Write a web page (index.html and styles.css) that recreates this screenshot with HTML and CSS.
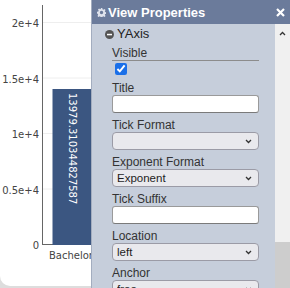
FILE: index.html
```html
<!DOCTYPE html>
<html lang="en">
  <head>
    <meta charset="UTF-8" />
    <meta name="viewport" content="width=device-width, initial-scale=1.0" />
    <title>View Properties</title>
    <link rel="stylesheet" href="styles.css">
  </head>
  <body>
    <div class="page">
      <div class="chart-card">
        <svg class="chart" width="91" height="286" viewBox="0 0 91 286">
          <g class="grid">
            <line x1="43" y1="22.5" x2="91" y2="22.5" />
            <line x1="43" y1="78" x2="91" y2="78" />
            <line x1="43" y1="133.5" x2="91" y2="133.5" />
            <line x1="43" y1="189" x2="91" y2="189" />
          </g>
          <g class="ticks">
            <text x="39" y="27">2e+4</text>
            <text x="39" y="82.5">1.5e+4</text>
            <text x="39" y="138">1e+4</text>
            <text x="39" y="193.5">0.5e+4</text>
            <text x="39" y="249">0</text>
          </g>
          <line class="axis" x1="42.5" y1="5" x2="42.5" y2="245" />
          <line class="axis" x1="42" y1="244.5" x2="91" y2="244.5" />
          <rect class="bar" x="52.5" y="89" width="40" height="156" />
          <text class="bar-label" transform="translate(68.5 93) rotate(90)">13979.310344827587</text>
          <text class="cat" x="49" y="259">Bachelor</text>
        </svg>
      </div>

      <aside class="props">
        <div class="props-head">
          <svg class="gear" width="9" height="9" viewBox="0 0 16 16">
            <path d="M6.6 0h2.8l.4 2.3 1.5.7 1.9-1.3 2 2-1.3 1.9.7 1.5 2.3.4v2.8l-2.3.4-.7 1.5 1.3 1.9-2 2-1.9-1.3-1.5.7-.4 2.3H6.6l-.4-2.3-1.5-.7-1.9 1.3-2-2 1.3-1.9-.7-1.5L0 9.4V6.6l2.3-.4.7-1.5-1.3-1.9 2-2 1.9 1.3 1.5-.7zM8 5a3 3 0 1 0 0 6 3 3 0 0 0 0-6z" />
          </svg>
          <span class="props-title">View Properties</span>
          <svg class="close" width="9" height="9" viewBox="0 0 9 9">
            <path d="M1 1l7 7M8 1l-7 7" />
          </svg>
        </div>
        <div class="props-body">
          <div class="props-content">
            <div class="group-title">
              <svg class="toggle" width="9" height="9" viewBox="0 0 9 9">
                <circle cx="4.5" cy="4.5" r="4.5" />
                <rect x="2" y="3.8" width="5" height="1.5" />
              </svg>
              <span>YAxis</span>
            </div>
            <label class="label underline">Visible</label>
            <div class="check-row"><input type="checkbox" checked /></div>

            <div class="field">
              <label class="label">Title</label>
              <input class="text" type="text" />
            </div>
            <div class="field">
              <label class="label">Tick Format</label>
              <div class="select-wrap">
                <select><option></option></select>
                <svg class="chev" width="7" height="5" viewBox="0 0 7 5"><path d="M1 1l2.5 2.5L6 1" /></svg>
              </div>
            </div>
            <div class="field">
              <label class="label">Exponent Format</label>
              <div class="select-wrap">
                <select><option>Exponent</option></select>
                <svg class="chev" width="7" height="5" viewBox="0 0 7 5"><path d="M1 1l2.5 2.5L6 1" /></svg>
              </div>
            </div>
            <div class="field">
              <label class="label">Tick Suffix</label>
              <input class="text" type="text" />
            </div>
            <div class="field">
              <label class="label">Location</label>
              <div class="select-wrap">
                <select><option>left</option></select>
                <svg class="chev" width="7" height="5" viewBox="0 0 7 5"><path d="M1 1l2.5 2.5L6 1" /></svg>
              </div>
            </div>
            <div class="field">
              <label class="label">Anchor</label>
              <div class="select-wrap">
                <select><option>free</option></select>
                <svg class="chev" width="7" height="5" viewBox="0 0 7 5"><path d="M1 1l2.5 2.5L6 1" /></svg>
              </div>
            </div>
          </div>
          <div class="scrollbar">
            <svg class="scroll-up" width="7" height="5" viewBox="0 0 7 5"><path d="M1 4l2.5-2.5L6 4" /></svg>
            <div class="thumb"></div>
          </div>
        </div>
      </aside>
    </div>
  </body>
</html>
```

FILE: styles.css
```css
html,
body {
  margin: 0;
  padding: 0;
  width: 100%;
  height: 100%;
  overflow: hidden;
  background-color: #dddddd;
}

.page {
  display: flex;
  height: 288px;
  font-family: "Liberation Sans", Arial, sans-serif;
}

.chart-card {
  width: 91px;
  height: 286px;
  flex: none;
  background: #fff;
  border-bottom-left-radius: 10px;
  overflow: hidden;
}

.chart {
  display: block;
  font-family: "DejaVu Sans", Verdana, sans-serif;
  font-size: 10px;
}

.grid line {
  stroke: #eeeeee;
  stroke-width: 1;
}

.ticks text {
  text-anchor: end;
  fill: #444;
}

.axis {
  stroke: #666;
  stroke-width: 1;
}

.bar {
  fill: #3b5681;
}

.bar-label {
  fill: #fff;
}

.cat {
  fill: #444;
}

.props {
  width: 198px;
  flex: none;
  display: flex;
  flex-direction: column;
  border-left: 1px solid #a3adbf;
  background: #c6cedb;
}

.props-head {
  height: 24px;
  flex: none;
  display: flex;
  align-items: center;
  padding: 0 5px 0 5px;
  background: #6b7b9b;
  color: #fff;
}

.gear {
  fill: #dfe3ec;
  margin-right: 2px;
}

.props-title {
  flex: 1;
  font-weight: bold;
  font-size: 13px;
}

.close path {
  stroke: #fff;
  stroke-width: 2.2;
  fill: none;
}

.props-body {
  flex: 1;
  display: flex;
  min-height: 0;
}

.props-content {
  flex: 1;
  padding: 2px 16px 0 20px;
  overflow: hidden;
}

.group-title {
  display: flex;
  align-items: center;
  gap: 3px;
  margin-left: -7px;
  font-size: 13px;
  line-height: 16px;
  color: #222;
}

.toggle circle {
  fill: #555;
}

.toggle rect {
  fill: #fff;
}

.label {
  display: block;
  font-size: 12px;
  line-height: 14px;
  color: #333;
}

.underline {
  margin-top: 4px;
  border-bottom: 1px solid #8c8c8c;
}

.check-row {
  height: 20px;
}

.check-row input {
  width: 12px;
  height: 12px;
  margin: 2px 0 0 3px;
  accent-color: #1a6fe8;
}

.field {
  display: flex;
  flex-direction: column;
  margin-bottom: 5px;
}

.text {
  box-sizing: border-box;
  height: 18px;
  width: 147px;
  margin: 0;
  border: 1px solid #9a9a9a;
  border-bottom-color: #7a7a7a;
  border-radius: 3px;
  background: #fff;
}

.select-wrap {
  display: grid;
  width: 147px;
  align-items: center;
}

.select-wrap select,
.select-wrap .chev {
  grid-area: 1 / 1;
}

.select-wrap select {
  appearance: none;
  box-sizing: border-box;
  height: 18px;
  width: 147px;
  margin: 0;
  padding: 0 0 0 4px;
  border: 1px solid #9b9ba6;
  border-radius: 4px;
  background: #e9e9ed;
  font-family: "Liberation Sans", Arial, sans-serif;
  font-size: 11.5px;
  color: #1e1e1e;
}

.chev {
  justify-self: end;
  margin-right: 7px;
  pointer-events: none;
}

.chev path,
.scroll-up path {
  fill: none;
  stroke: #333;
  stroke-width: 1.3;
}

.scrollbar {
  width: 15px;
  flex: none;
  display: flex;
  flex-direction: column;
  align-items: center;
  background: #f0f0f0;
}

.scroll-up {
  margin-top: 7px;
}

.thumb {
  margin-top: auto;
  align-self: stretch;
  height: 46px;
  background: #cdcdcd;
}
```
